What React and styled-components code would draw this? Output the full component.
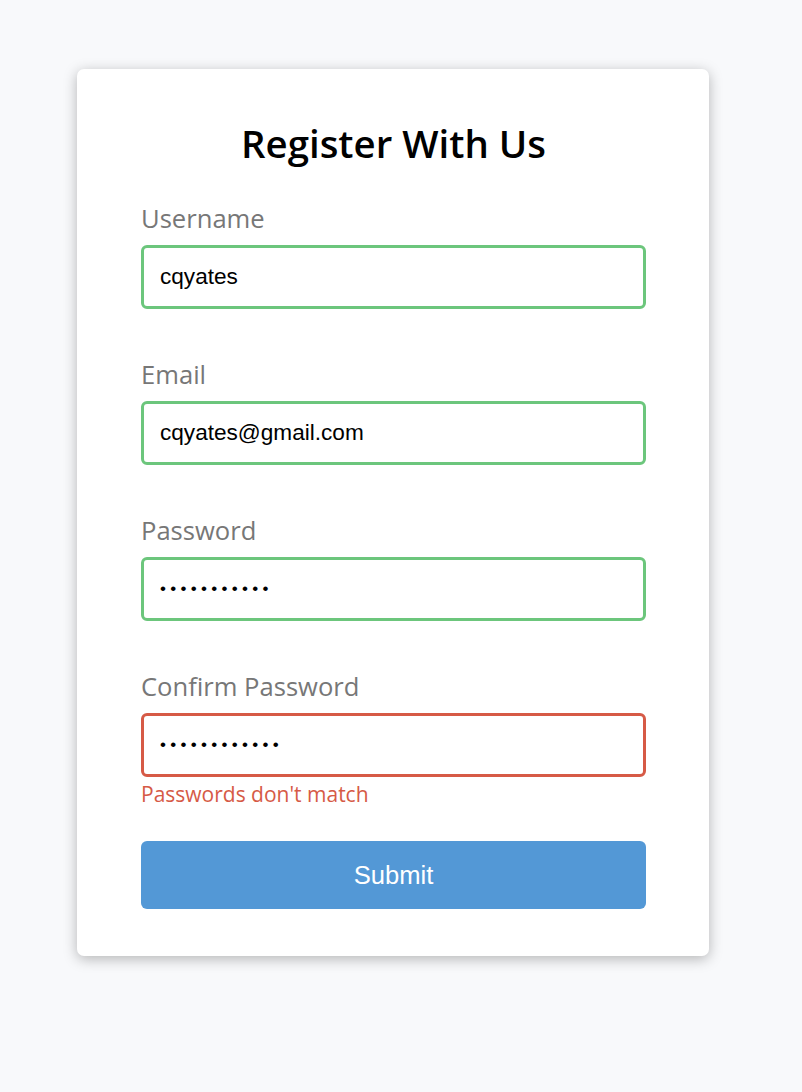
import React from "react";
import styled, { createGlobalStyle } from "styled-components";

const GlobalStyle = createGlobalStyle`
  * { box-sizing: border-box; }
  html, body { margin: 0; padding: 0; }
  body {
    background-color: #f8f9fb;
    font-family: "Open Sans", "Noto Sans", sans-serif;
  }
`;

const Page = styled.div`
  display: flex;
  justify-content: center;
  align-items: flex-start;
  padding: 69px 16px 40px 0;
  min-height: 1092px;
`;

const Card = styled.div`
  background-color: #fff;
  border-radius: 7px;
  box-shadow: 0 3px 14px rgba(0, 0, 0, 0.28);
  width: 632px;
`;

const Form = styled.form`
  padding: 48px 63px 47px 64px;
`;

const Title = styled.h2`
  text-align: center;
  margin: 0 0 32px;
  font-size: 38.4px;
  font-weight: 600;
  line-height: 52px;
  color: #000;
`;

const Field = styled.div`
  position: relative;
  padding-bottom: 32px;
  margin-bottom: 16px;
`;

const Label = styled.label`
  display: block;
  color: #777;
  font-size: 25.6px;
  line-height: 36px;
  margin-bottom: 8px;
`;

const Input = styled.input`
  display: block;
  width: 100%;
  height: 64px;
  border: 3px solid ${(p) => (p.$error ? "#d65a46" : "#6cc67c")};
  border-radius: 6px;
  padding: 0 16px;
  font-family: "Liberation Sans", Arial, sans-serif;
  font-size: ${(p) => (p.type === "password" ? "17px" : "22.6px")};
  color: #000;
  background: #fff;
  outline: none;
  letter-spacing: ${(p) => (p.type === "password" ? "4.3px" : "normal")};
`;

const ErrorText = styled.small`
  position: absolute;
  left: 0;
  bottom: 1px;
  color: #d65a46;
  font-size: 21px;
  line-height: 27px;
`;

const Button = styled.button`
  display: block;
  width: 100%;
  height: 68px;
  margin-top: 32px;
  background-color: #5398d6;
  border: none;
  border-radius: 6px;
  color: #fff;
  font-family: "Liberation Sans", Arial, sans-serif;
  font-size: 25.6px;
  cursor: pointer;
`;

const fields = [
  { label: "Username", type: "text", value: "cqyates" },
  { label: "Email", type: "text", value: "cqyates@gmail.com" },
  { label: "Password", type: "password", value: "12345678901" },
  {
    label: "Confirm Password",
    type: "password",
    value: "123456789012",
    error: "Passwords don't match",
  },
];

export default function App() {
  return (
    <>
      <GlobalStyle />
      <Page>
        <Card>
          <Form onSubmit={(e) => e.preventDefault()}>
            <Title>Register With Us</Title>
            {fields.map((f) => (
              <Field key={f.label}>
                <Label>{f.label}</Label>
                <Input
                  type={f.type}
                  defaultValue={f.value}
                  $error={!!f.error}
                  readOnly
                />
                {f.error && <ErrorText>{f.error}</ErrorText>}
              </Field>
            ))}
            <Button type="submit">Submit</Button>
          </Form>
        </Card>
      </Page>
    </>
  );
}
